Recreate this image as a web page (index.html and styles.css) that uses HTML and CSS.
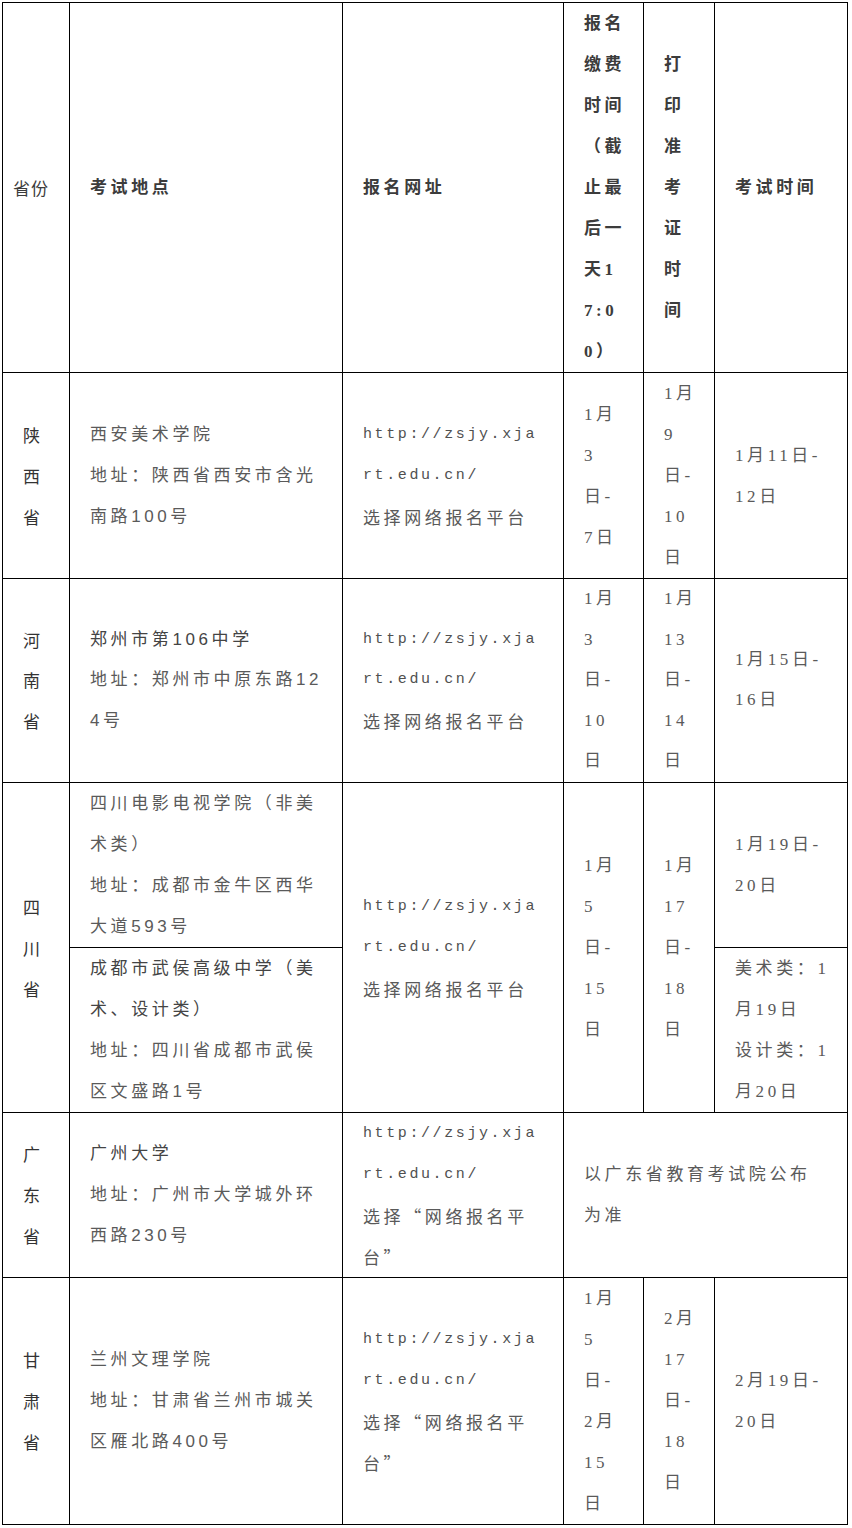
FILE: index.html
```html
<!DOCTYPE html>
<html lang="zh-CN">
<head>
<meta charset="utf-8">
<title>考试安排</title>
<link rel="stylesheet" href="styles.css">
</head>
<body>
<div class="wrap">
<table class="exam">
  <colgroup>
    <col class="c1"><col class="c2"><col class="c3"><col class="c4"><col class="c5"><col class="c6">
  </colgroup>
  <tbody>
    <tr>
      <td class="h-prov"><div class="l">省份</div></td>
      <td class="h"><div class="l">考试地点</div></td>
      <td class="h"><div class="l">报名网址</div></td>
      <td class="h"><div class="l">报名</div><div class="l">缴费</div><div class="l">时间</div><div class="l">（截</div><div class="l">止最</div><div class="l">后一</div><div class="l">天1</div><div class="l">7:0</div><div class="l">0）</div></td>
      <td class="h"><div class="l">打</div><div class="l">印</div><div class="l">准</div><div class="l">考</div><div class="l">证</div><div class="l">时</div><div class="l">间</div></td>
      <td class="h"><div class="l">考试时间</div></td>
    </tr>
    <tr>
      <td class="prov"><div class="l">陕</div><div class="l">西</div><div class="l">省</div></td>
      <td class="site"><div class="l">西安美术学院</div><div class="l">地址：陕西省西安市含光</div><div class="l">南路100号</div></td>
      <td class="url"><div class="l mono">http://zsjy.xja</div><div class="l mono">rt.edu.cn/</div><div class="l">选择网络报名平台</div></td>
      <td><div class="l">1月</div><div class="l">3</div><div class="l">日-</div><div class="l">7日</div></td>
      <td><div class="l">1月</div><div class="l">9</div><div class="l">日-</div><div class="l">10</div><div class="l">日</div></td>
      <td><div class="l">1月11日-</div><div class="l">12日</div></td>
    </tr>
    <tr class="tight">
      <td class="prov"><div class="l">河</div><div class="l">南</div><div class="l">省</div></td>
      <td class="site"><div class="l strong">郑州市第106中学</div><div class="l">地址：郑州市中原东路12</div><div class="l">4号</div></td>
      <td class="url"><div class="l mono">http://zsjy.xja</div><div class="l mono">rt.edu.cn/</div><div class="l">选择网络报名平台</div></td>
      <td><div class="l">1月</div><div class="l">3</div><div class="l">日-</div><div class="l">10</div><div class="l">日</div></td>
      <td><div class="l">1月</div><div class="l">13</div><div class="l">日-</div><div class="l">14</div><div class="l">日</div></td>
      <td><div class="l">1月15日-</div><div class="l">16日</div></td>
    </tr>
    <tr>
      <td class="prov" rowspan="2"><div class="l">四</div><div class="l">川</div><div class="l">省</div></td>
      <td class="site"><div class="l">四川电影电视学院（非美</div><div class="l">术类）</div><div class="l">地址：成都市金牛区西华</div><div class="l">大道593号</div></td>
      <td class="url" rowspan="2"><div class="l mono">http://zsjy.xja</div><div class="l mono">rt.edu.cn/</div><div class="l">选择网络报名平台</div></td>
      <td rowspan="2"><div class="l">1月</div><div class="l">5</div><div class="l">日-</div><div class="l">15</div><div class="l">日</div></td>
      <td rowspan="2"><div class="l">1月</div><div class="l">17</div><div class="l">日-</div><div class="l">18</div><div class="l">日</div></td>
      <td><div class="l">1月19日-</div><div class="l">20日</div></td>
    </tr>
    <tr>
      <td class="site"><div class="l strong">成都市武侯高级中学（美</div><div class="l strong">术、设计类）</div><div class="l">地址：四川省成都市武侯</div><div class="l">区文盛路1号</div></td>
      <td><div class="l">美术类：1</div><div class="l">月19日</div><div class="l">设计类：1</div><div class="l">月20日</div></td>
    </tr>
    <tr>
      <td class="prov"><div class="l">广</div><div class="l">东</div><div class="l">省</div></td>
      <td class="site"><div class="l strong">广州大学</div><div class="l">地址：广州市大学城外环</div><div class="l">西路230号</div></td>
      <td class="url"><div class="l mono">http://zsjy.xja</div><div class="l mono">rt.edu.cn/</div><div class="l">选择“网络报名平</div><div class="l">台”</div></td>
      <td colspan="3"><div class="l">以广东省教育考试院公布</div><div class="l">为准</div></td>
    </tr>
    <tr>
      <td class="prov"><div class="l">甘</div><div class="l">肃</div><div class="l">省</div></td>
      <td class="site"><div class="l">兰州文理学院</div><div class="l">地址：甘肃省兰州市城关</div><div class="l">区雁北路400号</div></td>
      <td class="url"><div class="l mono">http://zsjy.xja</div><div class="l mono">rt.edu.cn/</div><div class="l">选择“网络报名平</div><div class="l">台”</div></td>
      <td><div class="l">1月</div><div class="l">5</div><div class="l">日-</div><div class="l">2月</div><div class="l">15</div><div class="l">日</div></td>
      <td><div class="l">2月</div><div class="l">17</div><div class="l">日-</div><div class="l">18</div><div class="l">日</div></td>
      <td><div class="l">2月19日-</div><div class="l">20日</div></td>
    </tr>
  </tbody>
</table>
</div>
</body>
</html>
```

FILE: styles.css
```css
html, body {
  margin: 0;
  padding: 0;
  background: #ffffff;
}

.wrap {
  padding: 2px 0 0 2px;
}

.exam {
  border-collapse: collapse;
  table-layout: fixed;
  width: 845px;
}

.c1 { width: 67px; }
.c2 { width: 273px; }
.c3 { width: 221px; }
.c4 { width: 80px; }
.c5 { width: 71px; }
.c6 { width: 133px; }

.exam td {
  border: 1px solid #000000;
  padding: 0 6px 0 20px;
  vertical-align: middle;
  text-align: left;
  font-size: 17px;
  letter-spacing: 3.6px;
  color: #5a5a5a;
  white-space: nowrap;
  font-family: "Liberation Serif", "Noto Sans CJK SC", serif;
}

.l {
  display: block;
  height: 41px;
  line-height: 41px;
  overflow: visible;
}

.tight .l {
  height: 40.6px;
  line-height: 40.6px;
}

.exam td.h {
  color: #3c3c3c;
  font-weight: bold;
}

.exam td.h-prov {
  padding-left: 10px;
  color: #3c3c3c;
  letter-spacing: 1px;
  font-family: "Noto Sans CJK SC", sans-serif;
}

.exam td.prov {
  color: #333333;
  font-family: "Noto Sans CJK SC", sans-serif;
}

.exam td.site {
  font-family: "Liberation Sans", "Noto Sans CJK SC", sans-serif;
}

.exam td.url {
  font-family: "Noto Sans CJK SC", sans-serif;
  font-feature-settings: "fwid" 1;
}

.strong {
  color: #444444;
}

.exam td .mono {
  font-family: "Liberation Mono", monospace;
  font-feature-settings: normal;
  font-size: 15px;
  letter-spacing: 2.6px;
  color: #505050;
}
```
